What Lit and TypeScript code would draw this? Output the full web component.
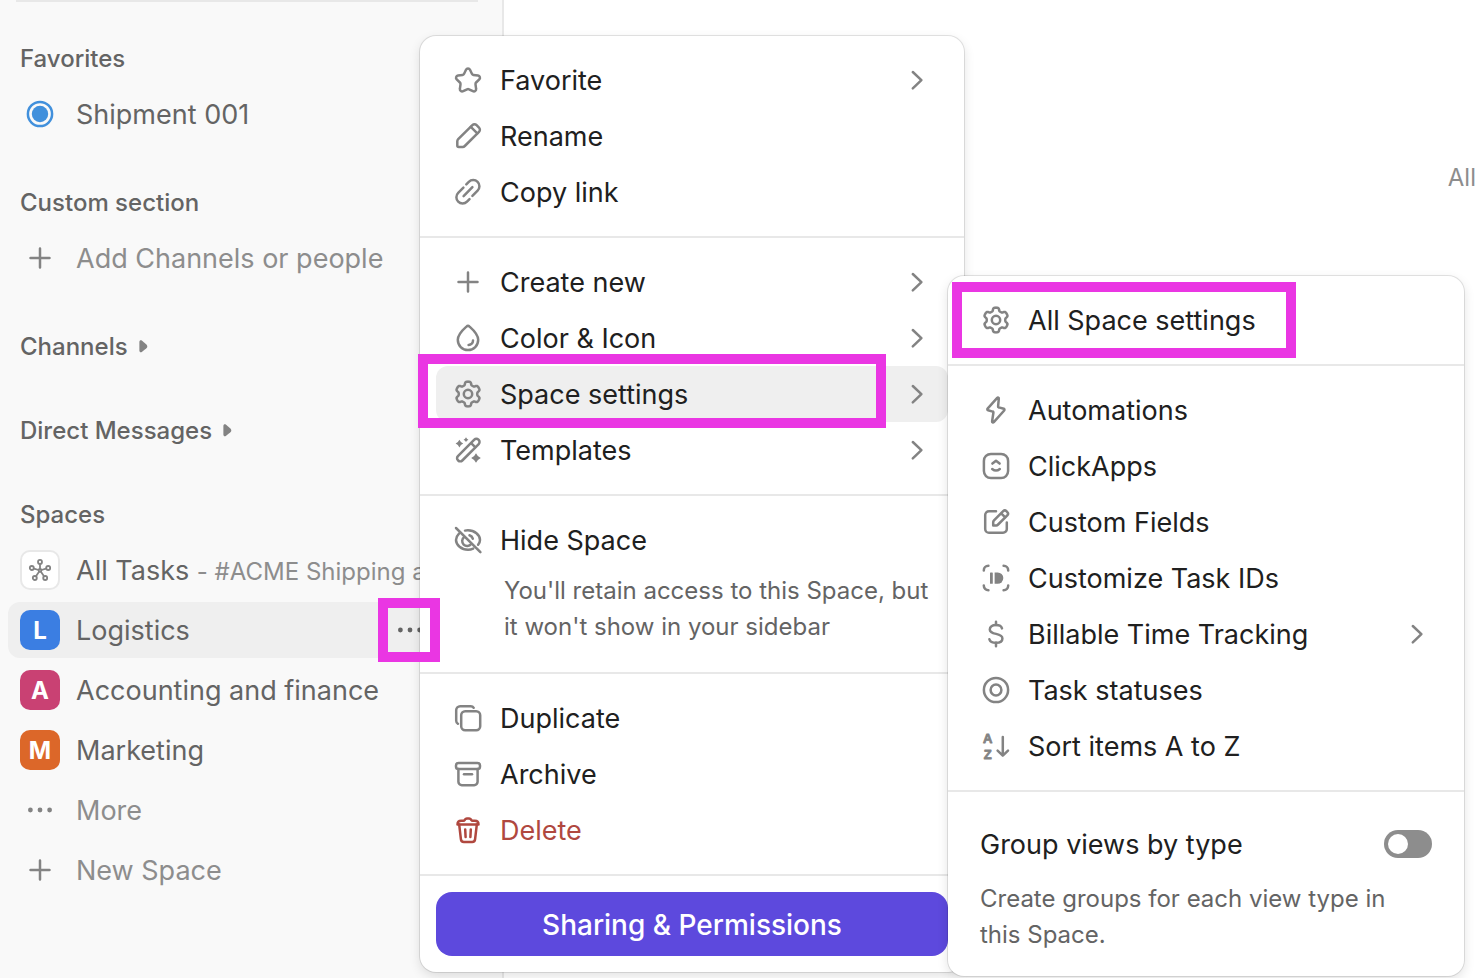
import { LitElement, html, svg, css, nothing, TemplateResult } from "lit";
import { customElement, property } from "lit/decorators.js";
import { classMap } from "lit/directives/class-map.js";

/** Outline of a six-toothed gear centred in a 32-unit box. */
function gearPath(): string {
  const steps = 120;
  const points: string[] = [];
  for (let i = 0; i < steps; i++) {
    const a = (i / steps) * Math.PI * 2;
    // cos 6(a - 90°) peaks halfway between the teeth, so it is negated to put teeth at top and bottom.
    const wave = Math.tanh(-2.2 * Math.cos(6 * a) + 0.3);
    const r = 10.8 + 1.6 * wave;
    points.push(`${(16 + r * Math.cos(a)).toFixed(2)} ${(16 + r * Math.sin(a)).toFixed(2)}`);
  }
  return `M${points.join("L")}Z`;
}

const sparkle = (x: number, y: number, s: number) => svg`
  <path class="solid" d="M${x} ${y - s}Q${x + s * 0.3} ${y - s * 0.3} ${x + s} ${y}Q${x + s * 0.3} ${y + s * 0.3} ${x} ${y + s}Q${x - s * 0.3} ${y + s * 0.3} ${x - s} ${y}Q${x - s * 0.3} ${y - s * 0.3} ${x} ${y - s}Z"/>`;

const ICONS: Record<string, unknown> = {
  star: svg`<path d="M14 5.8c.8-1.7 3.2-1.7 4 0l1.9 4c.3.6.8 1 1.5 1.1l4.6.6c1.9.3 2.6 2.5 1.3 3.8l-3.2 3.2c-.5.5-.7 1.1-.6 1.8l.6 4.5c.3 1.9-1.6 3.2-3.2 2.4l-3.9-1.9c-.6-.3-1.3-.3-1.9 0l-3.9 1.9c-1.7.8-3.6-.5-3.3-2.4l.6-4.5c.1-.7-.1-1.3-.6-1.8l-3.2-3.2c-1.3-1.3-.6-3.5 1.3-3.8l4.6-.6c.7-.1 1.2-.5 1.5-1.1z"/>`,
  pencil: svg`<path d="M5.3 25.4v-4.1c0-.8.3-1.5.9-2.1L20.4 5.2c1.2-1.2 3-1.2 4.2 0l2.4 2.4c1.2 1.2 1.2 3 0 4.2L12.8 26c-.6.6-1.3.9-2.1.9H6.8c-.8 0-1.5-.7-1.5-1.5z"/><path d="M18.8 6.9l6.5 6.5"/>`,
  link: svg`<path d="M14.3 8.3l2.5-2.5a6.2 6.2 0 0 1 8.8 8.8l-5.2 5.2"/><path d="M11.4 11.6l-5.2 5.2a6.2 6.2 0 0 0 8.8 8.8l2.5-2.5"/><path d="M11.6 20.2l8.8-9"/>`,
  plus: svg`<path d="M16 6.5v19M6.5 16h19"/>`,
  drop: svg`<path d="M14.4 4.6c.9-.9 2.3-.9 3.2 0 3.4 3 8.6 7.9 8.6 13.2 0 5.8-4.4 10.3-10.2 10.3S5.8 23.6 5.8 17.8c0-5.3 5.2-10.2 8.6-13.2z"/><path d="M21 18.6c0 2.5-1.8 4.3-4.4 4.3"/>`,
  gear: svg`<g transform="rotate(0 16 16)"><path d=${gearPath()} transform="rotate(0 16 16)"/></g><circle cx="16" cy="16" r="4.2"/>`,
  wand: svg`<rect x="1.8" y="13" width="29" height="6.2" rx="2.9" transform="rotate(-45 16.3 16.1)"/><path d="M19.6 9.6l3.6 3.6"/>${sparkle(7.4, 9.6, 3.8)}${sparkle(14, 5.7, 2.4)}${sparkle(24, 24, 4.8)}`,
  hidden: svg`<path d="M13 6.6a13 13 0 0 1 3-.3c6.6 0 12 4.8 12 9.7 0 1.6-.7 3.3-1.9 4.8"/><path d="M7 9.6C5.2 11.4 4 13.7 4 16c0 4.9 5.4 9.7 12 9.7 1.9 0 3.6-.4 5.2-1.1"/><path d="M12.2 13a5 5 0 1 0 7 7"/><path d="M17.5 11.3a5 5 0 0 1 3.3 3.4"/><path d="M4 4l24.4 24.2"/>`,
  copy: svg`<rect x="9.2" y="9.2" width="19" height="19" rx="4"/><path d="M6 21.8c-1.2-.6-1.8-1.6-1.8-3V8.2c0-2.2 1.8-4 4-4h10.5c1.4 0 2.4.6 3 1.6"/>`,
  archive: svg`<rect x="4" y="5" width="24" height="6" rx="2.6"/><path d="M6.4 11v12.8a3.4 3.4 0 0 0 3.4 3.4h12.4a3.4 3.4 0 0 0 3.4-3.4V11"/><path d="M12 16.2h8"/>`,
  trash: svg`<path d="M5.5 10.4c0-2.4 1.4-3.7 3.6-3.7h2.2c.9 0 1.2-.4 1.6-1 .5-.9 1.1-1.3 2-1.3h2.2c.9 0 1.5.4 2 1.3.4.6.7 1 1.6 1h2.2c2.2 0 3.6 1.3 3.6 3.7z"/><path d="M7.2 10.6l1.7 14.6a3 3 0 0 0 3 2.8h8.2a3 3 0 0 0 3-2.8l1.7-14.6"/><path d="M13.2 15.4l.4 7.6M18.8 15.4l-.4 7.6"/>`,
  bolt: svg`<path d="M18.8 4.6c.1-1-.9-1.4-1.6-.7L7.6 14.6c-.5.6-.3 1.5.5 1.7l4.6 1.3c.5.1.8.6.7 1.1l-1.3 8.6c-.1 1 1 1.5 1.7.8l10.4-11.6c.5-.6.3-1.5-.4-1.7l-5-1.4c-.5-.1-.8-.6-.7-1.1z"/>`,
  clickapps: svg`<rect x="3.9" y="3.9" width="24.2" height="24.2" rx="7"/><path d="M12.4 13.6l3.6-2.8 3.6 2.8M12.2 19c2.3 1.9 5.3 1.9 7.6 0"/>`,
  fields: svg`<path d="M16 5.2H9A3.8 3.8 0 0 0 5.2 9v14A3.8 3.8 0 0 0 9 26.8h14a3.8 3.8 0 0 0 3.8-3.8v-6.5"/><path d="M13.2 19.4v-3.2c0-.7.3-1.3.8-1.8l9.2-9.2c.9-.9 2.3-.9 3.2 0l.9.9c.9.9.9 2.3 0 3.2l-9.2 9.2c-.5.5-1.1.9-1.8.9z"/><path d="M21.4 7.6l3.6 3.6"/>`,
  ids: svg`<path d="M3.8 8.4c0-2.6 1.9-4.6 4.6-4.6M23.6 3.8c2.7 0 4.6 2 4.6 4.6M28.2 23.6c0 2.7-1.9 4.6-4.6 4.6M8.4 28.2c-2.7 0-4.6-1.9-4.6-4.6"/><rect class="solid" x="10" y="10.4" width="2.8" height="11.4" rx=".6"/><path class="solid" d="M14.6 10.4h3a5.7 5.7 0 0 1 0 11.4h-3z"/>`,
  dollar: svg`<path d="M22 10.4c-.6-2.2-2.7-3.3-6-3.3-3.8 0-6.2 1.6-6.2 4.3 0 6.2 12.6 2.8 12.6 9 0 2.7-2.4 4.4-6.4 4.4-3.6 0-5.9-1.3-6.6-3.5"/><path d="M16 3.8V7M16 24.8v3.4"/>`,
  target: svg`<circle cx="16" cy="16" r="12.1"/><circle cx="16" cy="16" r="5.4"/>`,
  sort: svg`<text class="glyph" x="7.8" y="13.2">A</text><text class="glyph" x="7.8" y="28.8">Z</text><path d="M22.8 7v18.6M17.6 20.6l5.2 5 5.2-5"/>`,
  chevron: svg`<path d="M12.8 8l8.6 8.2-8.6 8.2"/>`,
  dots: svg`<circle class="solid" cx="6.4" cy="16" r="2.4"/><circle class="solid" cx="16" cy="16" r="2.4"/><circle class="solid" cx="25.6" cy="16" r="2.4"/>`,
  status: svg`<circle cx="16" cy="16" r="12.1"/><circle class="solid" cx="16" cy="16" r="8.2"/>`,
  hub: svg`<g class="thin"><circle cx="16" cy="7.9" r="2"/><circle cx="7.8" cy="14" r="2"/><circle cx="24.2" cy="14" r="2"/><circle cx="10.8" cy="24" r="2"/><circle cx="21.2" cy="24" r="2"/><circle cx="16" cy="16.4" r="1.4"/><path d="M16 10v5M10 14.6l4.6 1.4M22 14.6l-4.6 1.4M12 22.3l3.2-4.7M20 22.3l-3.2-4.7"/></g>`,
  caret: svg`<path class="solid" d="M11.4 12c0-1.6 1.2-2.2 2.4-1.4l4.6 3.8c1.2 1 1.2 2.8 0 3.8l-4.6 3.8c-1.2.8-2.4.2-2.4-1.4z"/>`,
};

@customElement("ui-icon")
export class UiIcon extends LitElement {
  @property() name = "";

  static styles = css`
    :host { display: block; flex: none; width: 32px; height: 32px; }
    svg {
      display: block; width: 100%; height: 100%; overflow: visible;
      fill: none; stroke: currentColor; stroke-width: 2.5;
      stroke-linecap: round; stroke-linejoin: round;
    }
    .solid { fill: currentColor; stroke: none; }
    .thin { stroke-width: 1.8; }
    .glyph {
      fill: currentColor; stroke-width: 0.8; text-anchor: middle;
      font: 700 13px "Liberation Sans", Arial, sans-serif;
    }
  `;

  render() {
    return html`<svg viewBox="0 0 32 32" aria-hidden="true">${ICONS[this.name]}</svg>`;
  }
}

interface MenuEntry {
  icon: string;
  label: string;
  more?: boolean;
  active?: boolean;
  danger?: boolean;
}

const SPACE_MENU: MenuEntry[][] = [
  [
    { icon: "star", label: "Favorite", more: true },
    { icon: "pencil", label: "Rename" },
    { icon: "link", label: "Copy link" },
  ],
  [
    { icon: "plus", label: "Create new", more: true },
    { icon: "drop", label: "Color & Icon", more: true },
    { icon: "gear", label: "Space settings", more: true, active: true },
    { icon: "wand", label: "Templates", more: true },
  ],
  [{ icon: "hidden", label: "Hide Space" }],
  [
    { icon: "copy", label: "Duplicate" },
    { icon: "archive", label: "Archive" },
    { icon: "trash", label: "Delete", danger: true },
  ],
];

const SETTINGS_MENU: MenuEntry[][] = [
  [{ icon: "gear", label: "All Space settings" }],
  [
    { icon: "bolt", label: "Automations" },
    { icon: "clickapps", label: "ClickApps" },
    { icon: "fields", label: "Custom Fields" },
    { icon: "ids", label: "Customize Task IDs" },
    { icon: "dollar", label: "Billable Time Tracking", more: true },
    { icon: "target", label: "Task statuses" },
    { icon: "sort", label: "Sort items A to Z" },
  ],
];

@customElement("app-root")
export class AppRoot extends LitElement {
  static styles = css`
    :host {
      display: block; position: relative; height: 100vh; overflow: hidden;
      background: #fff; color: #202020;
      font-family: Inter, "Liberation Sans", sans-serif;
      font-size: 27px; line-height: 36px;
    }
    *, *::before { box-sizing: border-box; }
    button, a {
      font: inherit; color: inherit; text-decoration: none; text-align: left;
      background: none; border: 0; margin: 0; padding: 0; cursor: pointer;
    }
    h2, p, ul { margin: 0; padding: 0; font: inherit; list-style: none; }
    .label { padding-top: 2px; }

    .shell { display: flex; height: 100%; }

    .sidebar {
      flex: none; width: 504px; background: #f9f9f9; color: #646464;
      border-right: 2px solid #e8e8e8;
    }
    .rule { height: 2px; margin: 0 24px 28px 16px; background: #e8e8e8; }
    .section { margin-bottom: 28px; padding: 0 8px; }
    .heading {
      display: flex; align-items: center; height: 56px; padding-left: 12px;
      font-size: 24px; font-weight: 500;
    }
    .heading ui-icon { color: #838383; }
    .rows { display: flex; flex-direction: column; gap: 4px; padding-bottom: 4px; }
    .row {
      display: flex; align-items: center; height: 56px;
      padding-left: 12px; border-radius: 12px; white-space: nowrap; overflow: hidden;
    }
    .row.selected { background: #efefef; }
    .row.muted { color: #8d8d8d; }
    .row.muted ui-icon { color: #838383; }
    .entry { display: flex; flex: 1; align-items: center; gap: 16px; }
    .slot { display: flex; flex: none; align-items: center; justify-content: center; width: 40px; height: 40px; }
    .slot.blue { color: #4190dc; }
    .tile { border-radius: 10px; }
    .letter { padding-top: 2px; color: #fff; font-size: 24px; font-weight: 700; }
    .logistics { background: #3b7ee2; }
    .accounting { background: #c94173; }
    .marketing { background: #dc6729; }
    .hub { background: #fff; border: 2px solid #e8e8e8; color: #838383; }
    .note { font-size: 24px; color: #8d8d8d; }
    .dots { margin-right: 68px; }

    .main { flex: 1; min-width: 0; display: flex; justify-content: flex-end; padding: 160px 6px 0 0; }
    .filter { height: 36px; color: #8d8d8d; font-size: 24px; }

    .menu {
      position: absolute; background: #fff; border-radius: 16px;
      box-shadow: 0 0 0 1px rgba(0, 0, 0, 0.1), 0 4px 12px rgba(0, 0, 0, 0.12);
    }
    .space-menu { left: 420px; top: 36px; width: 544px; }
    .settings-menu { left: 948px; top: 276px; width: 516px; }
    .group { padding: 16px; border-bottom: 2px solid #e8e8e8; }
    .item {
      display: flex; align-items: center; gap: 16px; width: 100%; height: 56px;
      padding: 0 16px; border-radius: 12px;
    }
    .item.active { background: #efefef; }
    .item ui-icon { color: #838383; }
    .item .label { flex: 1; }
    .item.danger, .item.danger ui-icon { color: #b0483f; }
    .hint { color: #646464; font-size: 24px; line-height: 36px; }
    .group .hint { padding: 5px 0 11px 68px; }
    .footer { padding: 16px; }
    .share {
      display: flex; align-items: center; justify-content: center;
      width: 100%; height: 64px; border-radius: 16px;
      background: #5d49dd; color: #fff; font-size: 28px; font-weight: 500;
    }
    .toggle-block { padding: 24px 32px 23px; }
    .toggle-row { display: flex; align-items: center; justify-content: space-between; height: 56px; margin-bottom: 9px; }
    .switch {
      appearance: none; display: flex; align-items: center; margin: 0; padding: 4px;
      width: 48px; height: 28px; border-radius: 14px; background: #8d8d8d;
    }
    .switch::before { content: ""; width: 20px; height: 20px; border-radius: 50%; background: #fff; }
    .switch:checked { justify-content: flex-end; background: #5d49dd; }

    .marker { position: absolute; border: 10px solid #ea36e3; pointer-events: none; }
    .marker.on-dots { left: 378px; top: 598px; width: 62px; height: 64px; }
    .marker.on-settings { left: 418px; top: 354px; width: 468px; height: 74px; }
    .marker.on-all { left: 952px; top: 282px; width: 344px; height: 76px; }
  `;

  private row(slot: TemplateResult, label: unknown, cls = "", extra: unknown = nothing) {
    return html`<li class="row ${cls}"><a class="entry" href="#">${slot}<span class="label">${label}</span></a>${extra}</li>`;
  }

  private iconSlot(name: string, cls = "") {
    return html`<span class="slot ${cls}"><ui-icon name=${name}></ui-icon></span>`;
  }

  private tile(letter: string, cls: string) {
    return html`<span class="slot tile letter ${cls}">${letter}</span>`;
  }

  private heading(text: string, collapsed = false) {
    return html`<h2 class="heading">
      <span class="label">${text}</span>${collapsed ? html`<ui-icon name="caret"></ui-icon>` : nothing}
    </h2>`;
  }

  private item(e: MenuEntry) {
    return html`<button class=${classMap({ item: true, active: !!e.active, danger: !!e.danger })} role="menuitem">
      <ui-icon name=${e.icon}></ui-icon><span class="label">${e.label}</span>
      ${e.more ? html`<ui-icon name="chevron"></ui-icon>` : nothing}
    </button>`;
  }

  private groups(groups: MenuEntry[][]) {
    return groups.map(
      (g) => html`<div class="group">
        ${g.map((e) => this.item(e))}
        ${g[0].icon === "hidden"
          ? html`<p class="hint">You'll retain access to this Space, but it won't show in your sidebar</p>`
          : nothing}
      </div>`,
    );
  }

  render() {
    return html`
      <div class="shell">
        <nav class="sidebar">
          <div class="rule"></div>
          <section class="section">
            ${this.heading("Favorites")}
            <ul class="rows">${this.row(this.iconSlot("status", "blue"), "Shipment 001")}</ul>
          </section>
          <section class="section">
            ${this.heading("Custom section")}
            <ul class="rows">${this.row(this.iconSlot("plus"), "Add Channels or people", "muted")}</ul>
          </section>
          <section class="section">${this.heading("Channels", true)}</section>
          <section class="section">${this.heading("Direct Messages", true)}</section>
          <section class="section">
            ${this.heading("Spaces")}
            <ul class="rows">
              ${this.row(this.iconSlot("hub", "tile hub"), html`All Tasks <span class="note">- #ACME Shipping a</span>`)}
              ${this.row(
                this.tile("L", "logistics"),
                "Logistics",
                "selected",
                html`<button class="dots"><ui-icon name="dots"></ui-icon></button>`,
              )}
              ${this.row(this.tile("A", "accounting"), "Accounting and finance")}
              ${this.row(this.tile("M", "marketing"), "Marketing")}
              ${this.row(this.iconSlot("dots"), "More", "muted")}
              ${this.row(this.iconSlot("plus"), "New Space", "muted")}
            </ul>
          </section>
        </nav>
        <main class="main"><span class="filter">All</span></main>
      </div>

      <div class="menu space-menu" role="menu">
        ${this.groups(SPACE_MENU)}
        <div class="footer"><button class="share"><span class="label">Sharing &amp; Permissions</span></button></div>
      </div>

      <div class="menu settings-menu" role="menu">
        ${this.groups(SETTINGS_MENU)}
        <div class="toggle-block">
          <div class="toggle-row">
            <label class="label" for="group-views">Group views by type</label>
            <input class="switch" id="group-views" type="checkbox" role="switch" />
          </div>
          <p class="hint">Create groups for each view type in this Space.</p>
        </div>
      </div>

      <div class="marker on-dots"></div>
      <div class="marker on-settings"></div>
      <div class="marker on-all"></div>
    `;
  }
}
